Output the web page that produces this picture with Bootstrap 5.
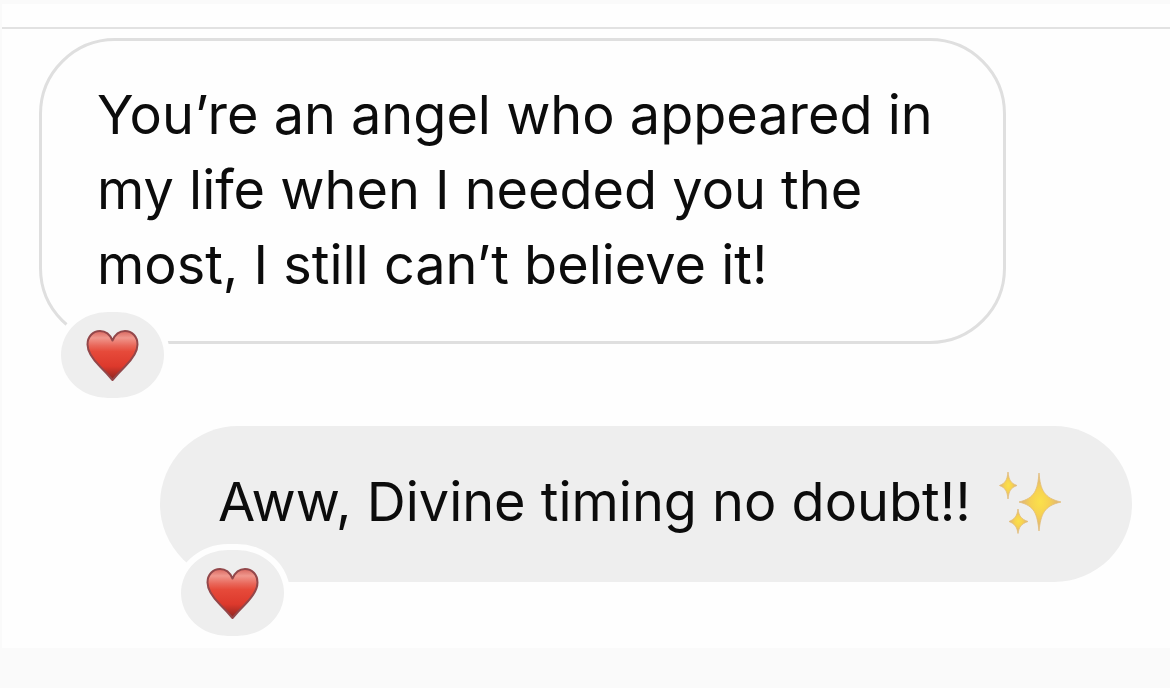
<!DOCTYPE html>
<html lang="en">
<head>
<meta charset="utf-8">
<meta name="viewport" content="width=device-width, initial-scale=1">
<title>Conversation</title>
<link href="https://cdn.jsdelivr.net/npm/bootstrap@5.3.0/dist/css/bootstrap.min.css" rel="stylesheet">
<style>
  body { background: #fafafa; color: #0c0c0c; font-family: Inter, "Liberation Sans", sans-serif; }
  .chat-panel { margin: 4px 0 0 2px; background: #fefefe; }
  .chat-top { height: 23px; border-bottom: 2px solid #e2e2e2; box-sizing: content-box; }
  .thread { padding: 9px 38px 66px 37px; gap: 82px; }
  .bubble { font-size: 54px; line-height: 75px; }
  .bubble p { margin: 0; }
  .bubble-in { margin-right: 126px; padding: 36px 54px 39px 55px; border: 3px solid #dfdfdf; border-radius: 76px; }
  .bubble-out { margin-left: 121px; padding: 38px 58px 43px; background: #eee; border-radius: 78px; }
  .reaction { width: 115px; height: 98px; border: 6px solid #fefefe; border-radius: 53px / 49px; background: #eee; left: 13px; bottom: -63px; }
  .bubble-out .reaction { left: 15px; bottom: -60px; }
  .heart { width: 54px; height: 54px; }
  .sparkles { width: 64px; height: 64px; margin-left: 28px; }
</style>
</head>
<body>
<svg width="0" height="0" class="position-absolute" aria-hidden="true">
  <defs>
    <linearGradient id="heartFill" x1="0" y1="0" x2="0" y2="1">
      <stop offset="0" stop-color="#d9675f"/><stop offset=".14" stop-color="#f0978d"/><stop offset=".3" stop-color="#e9675a"/>
      <stop offset=".42" stop-color="#e64a3a"/><stop offset=".72" stop-color="#dd392c"/><stop offset="1" stop-color="#8c2420"/>
    </linearGradient>
    <radialGradient id="starFill">
      <stop offset="0" stop-color="#fbe14a"/><stop offset=".45" stop-color="#f6d152"/><stop offset="1" stop-color="#d9ae80"/>
    </radialGradient>
    <symbol id="heart" viewBox="0 0 54 54">
      <path d="M26.500 52C24 49 20 44.500 14 38.500C6.500 31 1.500 24.500 1.500 16.500C1.500 8.500 7 3 14 3C19.500 3 24 6.500 26.500 12.500C29 6.500 33.500 3 39 3C46 3 51.500 8.500 51.500 16.500C51.500 24.500 46.500 31 39 38.500C33 44.500 29 49 26.500 52Z" fill="url(#heartFill)" stroke="#93474a" stroke-width="2" stroke-linejoin="round"/>
    </symbol>
    <symbol id="sparkles" viewBox="0 0 64 64">
      <g fill="url(#starFill)" stroke="#e2bd78" stroke-width=".8" stroke-linejoin="round">
        <path d="M40 3C41.500 20 45 28 62 32C45 36 42 44 40 61C38 44 36 36 20 32C36 28 38.500 20 40 3Z"/>
        <path d="M9 2C10 10 11.500 13 18 15.500C11.500 18 10 21 9 29C8 21 6.500 18 .5 15.500C6.500 13 8 10 9 2Z"/>
        <path d="M19 39C20 46 22 49 29 51.500C22 54 20 57 19 63.500C18 57 16 54 10 51.500C16 49 18 46 19 39Z"/>
      </g>
    </symbol>
  </defs>
</svg>
<main class="chat-panel">
  <header class="chat-top"></header>
  <div class="thread d-flex flex-column">
    <article class="bubble bubble-in position-relative">
      <p>You’re an angel who appeared in<br>my life when I needed you the<br>most, I still can’t believe it!</p>
      <span class="reaction position-absolute d-flex align-items-center justify-content-center"><svg class="heart" role="img" aria-label="Red heart"><use href="#heart"/></svg></span>
    </article>
    <article class="bubble bubble-out position-relative">
      <p class="d-flex align-items-center">Aww, Divine timing no doubt!! <svg class="sparkles flex-shrink-0" role="img" aria-label="Sparkles"><use href="#sparkles"/></svg></p>
      <span class="reaction position-absolute d-flex align-items-center justify-content-center"><svg class="heart" role="img" aria-label="Red heart"><use href="#heart"/></svg></span>
    </article>
  </div>
</main>
<script src="https://cdn.jsdelivr.net/npm/bootstrap@5.3.0/dist/js/bootstrap.bundle.min.js"></script>
</body>
</html>
